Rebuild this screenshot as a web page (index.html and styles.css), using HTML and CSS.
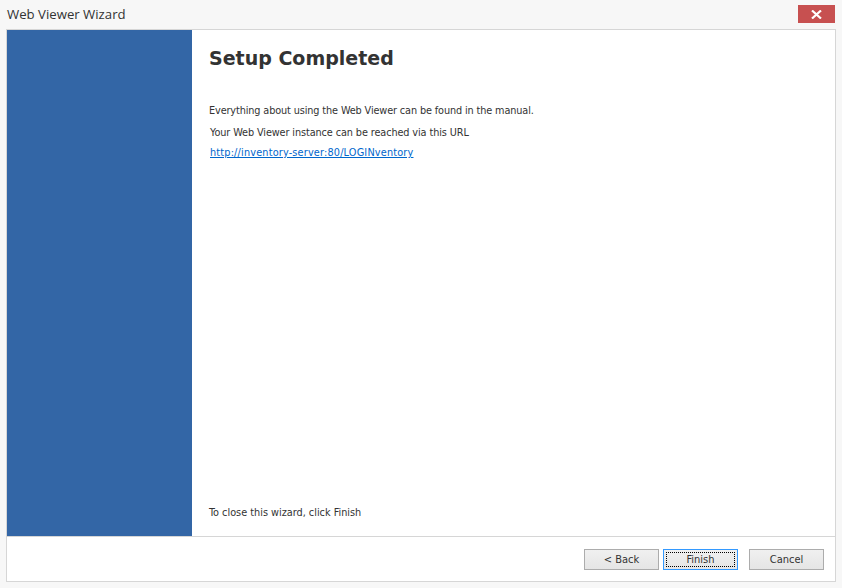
FILE: index.html
```html
<!DOCTYPE html>
<html lang="en">
<head>
    <meta charset="UTF-8">
    <title>Web Viewer Wizard</title>
    <link rel="stylesheet" href="styles.css">
</head>
<body>
    <div class="titlebar">
        <span class="title">Web Viewer Wizard</span>
        <button class="close" title="Close">
            <svg width="11" height="9" viewBox="0 0 11 9"><path d="M1 0.5 L10 8.5 M10 0.5 L1 8.5" stroke="#fff" stroke-width="2.2"/></svg>
        </button>
    </div>

    <div class="frame">
        <div class="main">
            <div class="sidebar"></div>
            <div class="content">
                <h1>Setup Completed</h1>
                <p class="first">Everything about using the Web Viewer can be found in the manual.</p>
                <p class="indent url-label">Your Web Viewer instance can be reached via this URL</p>
                <p class="indent"><a href="#">http://inventory-server:80/LOGINventory</a></p>
                <p class="closing">To close this wizard, click Finish</p>
            </div>
        </div>
        <div class="footer">
            <button class="btn">&lt; Back</button>
            <button class="btn default"><span>Finish</span></button>
            <button class="btn cancel">Cancel</button>
        </div>
    </div>
</body>
</html>
```

FILE: styles.css
```css
html, body {
    margin: 0;
    padding: 0;
    height: 100%;
}
body {
    background: #f7f7f7;
    font-family: Tahoma, "DejaVu Sans Condensed", "Liberation Sans", sans-serif;
    color: #333;
    display: flex;
    flex-direction: column;
}
.titlebar {
    height: 29px;
    display: flex;
    align-items: flex-start;
    justify-content: space-between;
    padding: 0 7px 0 7px;
    box-sizing: border-box;
}
.title {
    font-family: "Open Sans", "Noto Sans", sans-serif;
    font-size: 13.2px;
    color: #333;
    margin-top: 5px;
}
.close {
    width: 37px;
    height: 18px;
    margin-top: 5px;
    border: none;
    background: #c75050;
    padding: 0;
    display: flex;
    align-items: center;
    justify-content: center;
}
.frame {
    margin: 0 6px 6px 6px;
    height: 553px;
    border: 1px solid #d6d6d6;
    background: #fff;
    display: flex;
    flex-direction: column;
}
.main {
    flex: 1;
    display: flex;
    border-bottom: 1px solid #d6d6d6;
}
.sidebar {
    width: 185px;
    background: #3366a6;
}
.content {
    flex: 1;
    display: flex;
    flex-direction: column;
    padding: 0 16px 0 17px;
}
h1 {
    font-family: Verdana, "DejaVu Sans", sans-serif;
    font-size: 19px;
    font-weight: bold;
    color: #333;
    margin: 16px 0 0 0;
    line-height: 24px;
}
p {
    font-size: 10.8px;
    margin: 0;
    line-height: 14px;
}
.first { margin-top: 34px; letter-spacing: -0.12px; }
.indent { margin-left: 1px; margin-top: 6px; }
.url-label { margin-top: 8px; letter-spacing: -0.1px; }
a { color: #0066cc; letter-spacing: 0.18px; }
.closing { margin-top: auto; margin-bottom: 16px; }
.footer {
    height: 44px;
    display: flex;
    align-items: center;
    justify-content: flex-end;
    padding-right: 11px;
}
.btn {
    width: 75px;
    height: 21px;
    margin-top: 1px;
    border: 1px solid #acacac;
    background: linear-gradient(#f0f0f0, #e5e5e5);
    font-family: Tahoma, "DejaVu Sans Condensed", "Liberation Sans", sans-serif;
    font-size: 11px;
    color: #333;
    padding: 0;
    margin-left: 4px;
}
.btn.default {
    border-color: #3399ff;
    padding: 2px;
}
.btn.default span {
    display: block;
    height: 100%;
    border: 1px dotted #000;
    box-sizing: border-box;
    line-height: 13px;
}
.btn.cancel { margin-left: 11px; }
```
